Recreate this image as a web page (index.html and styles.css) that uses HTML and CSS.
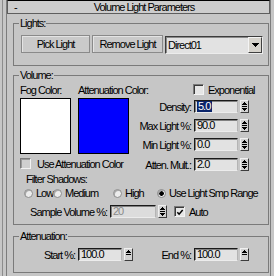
FILE: index.html
```html
<!DOCTYPE html>
<html>
<head>
<meta charset="utf-8">
<title>Volume Light Parameters</title>
<link rel="stylesheet" href="styles.css">
</head>
<body>
<div class="panel">
  <div class="rollout">
    <div class="titlebar">
      <span class="collapse">-</span>
      <span class="title">Volume Light Parameters</span>
    </div>

    <fieldset class="group lights">
      <legend>Lights:</legend>
      <div class="lights-row">
        <button class="btn pick">Pick Light</button>
        <button class="btn remove">Remove Light</button>
        <div class="combo">
          <span class="combo-text">Direct01</span>
          <span class="combo-arrow"><svg width="7" height="4" viewBox="0 0 7 4" shape-rendering="crispEdges"><path d="M0 0h7v1h-1v1h-1v1h-1v1h-1v-1h-1v-1h-1v-1h-1z" fill="#000"/></svg></span>
        </div>
      </div>
    </fieldset>

    <fieldset class="group volume">
      <legend>Volume:</legend>
      <div class="vol-top">
        <div class="colors">
          <div class="color-labels"><span class="fog-label">Fog Color:</span><span>Attenuation Color:</span></div>
          <div class="swatches"><div class="swatch white"></div><div class="swatch blue"></div></div>
          <div class="check-row use-atten"><span class="box disabled"></span><span>Use Attenuation Color</span></div>
        </div>
        <div class="params">
          <div class="spin-row exp-row"><span></span><div class="check-row exp"><span class="box"></span><span>Exponential</span></div></div>
          <div class="spin-row density"><span class="lbl">Density:</span><span class="field"><span class="sel">5.0</span></span><span class="spinner"><svg width="7" height="11" viewBox="0 0 7 11" shape-rendering="crispEdges"><path d="M3 1h1v1h1v1h1v1H1V3h1V2h1z M1 5h5v1H1z M1 7h5v1H5v1H4v1H3V9H2V8H1z" fill="#000"/></svg></span></div>
          <div class="spin-row maxl"><span class="lbl">Max Light %:</span><span class="field">90.0</span><span class="spinner"><svg width="7" height="11" viewBox="0 0 7 11" shape-rendering="crispEdges"><path d="M3 1h1v1h1v1h1v1H1V3h1V2h1z M1 5h5v1H1z M1 7h5v1H5v1H4v1H3V9H2V8H1z" fill="#000"/></svg></span></div>
          <div class="spin-row minl"><span class="lbl">Min Light %:</span><span class="field">0.0</span><span class="spinner"><svg width="7" height="11" viewBox="0 0 7 11" shape-rendering="crispEdges"><path d="M3 1h1v1h1v1h1v1H1V3h1V2h1z M1 5h5v1H1z M1 7h5v1H5v1H4v1H3V9H2V8H1z" fill="#000"/></svg></span></div>
          <div class="spin-row attm"><span class="lbl">Atten. Mult.:</span><span class="field">2.0</span><span class="spinner"><svg width="7" height="11" viewBox="0 0 7 11" shape-rendering="crispEdges"><path d="M3 1h1v1h1v1h1v1H1V3h1V2h1z M1 5h5v1H1z M1 7h5v1H5v1H4v1H3V9H2V8H1z" fill="#000"/></svg></span></div>
        </div>
      </div>
      <div class="filter-label">Filter Shadows:</div>
      <div class="radio-row">
        <div class="radio-item r-low"><span class="radio"></span><span>Low</span></div>
        <div class="radio-item r-med"><span class="radio"></span><span>Medium</span></div>
        <div class="radio-item r-high"><span class="radio"></span><span>High</span></div>
        <div class="radio-item r-range"><span class="radio on"></span><span>Use Light Smp Range</span></div>
      </div>
      <div class="sample-row">
        <span class="sample-label">Sample Volume %:</span>
        <span class="field sample-field disabled">20</span>
        <span class="spinner"><svg width="7" height="11" viewBox="0 0 7 11" shape-rendering="crispEdges"><path d="M3 1h1v1h1v1h1v1H1V3h1V2h1z M1 5h5v1H1z M1 7h5v1H5v1H4v1H3V9H2V8H1z" fill="#000"/></svg></span>
        <div class="check-row auto"><span class="box"><svg width="9" height="9" viewBox="0 0 9 9"><path d="M1.5 4.2l2 2.2 4-4.6" fill="none" stroke="#000" stroke-width="1.7"/></svg></span><span>Auto</span></div>
      </div>
    </fieldset>

    <fieldset class="group atten">
      <legend>Attenuation:</legend>
      <div class="atten-row">
        <span class="lbl">Start %:</span>
        <span class="field">100.0</span>
        <span class="spinner"><svg width="7" height="11" viewBox="0 0 7 11" shape-rendering="crispEdges"><path d="M3 1h1v1h1v1h1v1H1V3h1V2h1z M1 5h5v1H1z" fill="#000"/></svg></span>
        <span class="lbl">End %:</span>
        <span class="field">100.0</span>
        <span class="spinner"><svg width="7" height="11" viewBox="0 0 7 11" shape-rendering="crispEdges"><path d="M3 1h1v1h1v1h1v1H1V3h1V2h1z M1 5h5v1H1z" fill="#000"/></svg></span>
      </div>
    </fieldset>
  </div>
</div>
</body>
</html>
```

FILE: styles.css
```css
* { box-sizing: border-box; }
html, body { margin: 0; padding: 0; }
body {
  width: 274px;
  height: 276px;
  overflow: hidden;
  background: #c6c6c6;
  font-family: "Liberation Sans", Arial, sans-serif;
  font-size: 11px;
  line-height: 12px;
  letter-spacing: -1px;
  color: #000;
}

.panel {
  height: 276px;
  margin-left: 2px;
  border-left: 1px solid #8c8c8c;
  padding-left: 3px;
}

.rollout {
  width: 265px;
  height: 276px;
  border-left: 1px solid #7c7c7c;
  border-right: 1px solid #7c7c7c;
}

.titlebar {
  display: flex;
  align-items: center;
  height: 14px;
  border: 1px solid #5e5e5e;
  border-top-color: #000;
  background: #cdcdcd;
  padding-left: 6px;
}
.collapse { width: 5px; }
.title { flex: 1; text-align: center; }

.group {
  margin: 3px 1px 0 6px;
  border: 1px solid #7a7a7a;
  padding: 0 19px 0 6px;
  min-width: 0;
}
.group legend {
  padding: 0 1px;
  margin-left: -1px;
  line-height: 12px;
}

/* Lights */
.lights { padding: 6px 5px 11px 6px; }
.lights-row {
  display: flex;
  align-items: flex-start;
  gap: 2px;
  margin-left: 1px;
}
.btn {
  font: inherit;
  letter-spacing: inherit;
  color: #000;
  height: 18px;
  padding: 0;
  background: #cacaca;
  border: 1px solid #8a8a8a;
  box-shadow: inset 1px 1px 0 #e4e4e4;
}
.pick { width: 69px; }
.remove { width: 71px; }
.combo {
  display: flex;
  align-items: center;
  width: 98px;
  height: 18px;
  margin-top: 1px;
  border: 1px solid;
  border-color: #3c3c3c #ececec #ececec #3c3c3c;
  box-shadow: inset 1px 1px 0 #8a8a8a;
  background: #e2e2e2;
  padding-left: 2px;
}
.combo-text { flex: 1; }
.combo-arrow {
  width: 14px;
  height: 16px;
  display: flex;
  align-items: center;
  justify-content: center;
  background: #d6d3cc;
  border: 1px solid;
  border-color: #f4f4f4 #404040 #404040 #f4f4f4;
}

/* Volume */
.volume { padding: 3px 19px 6px 6px; }
.vol-top { display: flex; }
.colors { width: 109px; flex: none; }
.color-labels { display: flex; height: 12px; white-space: nowrap; }
.fog-label { width: 58px; flex: none; }
.swatches { display: flex; gap: 7px; margin-top: 2px; }
.swatch { width: 51px; height: 56px; border: 1px solid #000; }
.white { background: #fff; }
.blue { background: #0000ff; }

.check-row {
  display: flex;
  align-items: center;
  gap: 6px;
  height: 11px;
  white-space: nowrap;
}
.use-atten { margin-top: 4px; }
.box {
  width: 11px;
  height: 11px;
  flex: none;
  border: 1px solid;
  border-color: #7a7a7a #f2f2f2 #f2f2f2 #7a7a7a;
  box-shadow: inset 1px 1px 0 #3a3a3a;
  background: #e6e6e6;
  display: flex;
  align-items: center;
  justify-content: center;
}
.box svg { margin: 1px 0 0 1px; }
.box.disabled { background: #cfcfcf; box-shadow: inset 1px 1px 0 #9a9a9a; }

.params { flex: 1; }
.spin-row {
  display: grid;
  grid-template-columns: 1fr 44px 9px;
  column-gap: 2px;
  height: 13px;
  align-items: center;
}
.exp-row { height: 12px; align-items: start; }
.exp { grid-column: 2 / span 2; margin-left: -1px; gap: 4px; }
.density { margin-top: 4px; }
.maxl, .minl { margin-top: 6px; }
.attm { margin-top: 7px; }
.lbl { text-align: right; padding-right: 1px; white-space: nowrap; }

.field {
  display: flex;
  align-items: center;
  height: 13px;
  border: 1px solid;
  border-color: #1a1a1a #b4b4b4 #ececec #1a1a1a;
  box-shadow: inset 1px 1px 0 #808080;
  background: #e2e2e2;
  padding-left: 2px;
  line-height: 11px;
  overflow: hidden;
  white-space: nowrap;
}
.field.disabled { color: #8a8a8a; background: #dcdcdc; }
.sel { background: #0a246a; color: #fff; padding: 0 2px 0 1px; }

.spinner {
  width: 9px;
  height: 13px;
  display: flex;
  align-items: center;
  justify-content: center;
  background: #d2d2d2;
  border: 1px solid;
  border-color: #f0f0f0 #3c3c3c #3c3c3c #f0f0f0;
}

.filter-label { margin-top: 2px; padding-left: 6px; height: 12px; }

.radio-row {
  display: flex;
  align-items: center;
  height: 12px;
  margin-top: 2px;
  padding-left: 4px;
}
.radio-item { display: flex; align-items: center; gap: 3px; white-space: nowrap; flex: none; }
.r-low { width: 29px; }
.r-med { width: 60px; }
.r-high { width: 44px; }
.radio {
  width: 9px;
  height: 9px;
  border-radius: 50%;
  border: 1px solid #8c8c8c;
  background: #ececec;
  box-shadow: inset 1px 1px 0 #a8a8a8;
  flex: none;
}
.radio.on { background: radial-gradient(circle, #000 0 2px, #ececec 2.6px); }

.sample-row {
  display: flex;
  align-items: center;
  gap: 2px;
  height: 13px;
  margin-top: 6px;
}
.sample-label { width: 88px; text-align: right; padding-right: 1px; white-space: nowrap; }
.sample-field { width: 46px; }
.auto { margin-left: 5px; gap: 4px; }

/* Attenuation */
.atten { margin-top: 5px; padding: 6px 19px 11px 6px; }
.atten-row {
  display: grid;
  grid-template-columns: 56px 44px 9px 1fr 44px 9px;
  column-gap: 2px;
  height: 13px;
  align-items: center;
}
```
